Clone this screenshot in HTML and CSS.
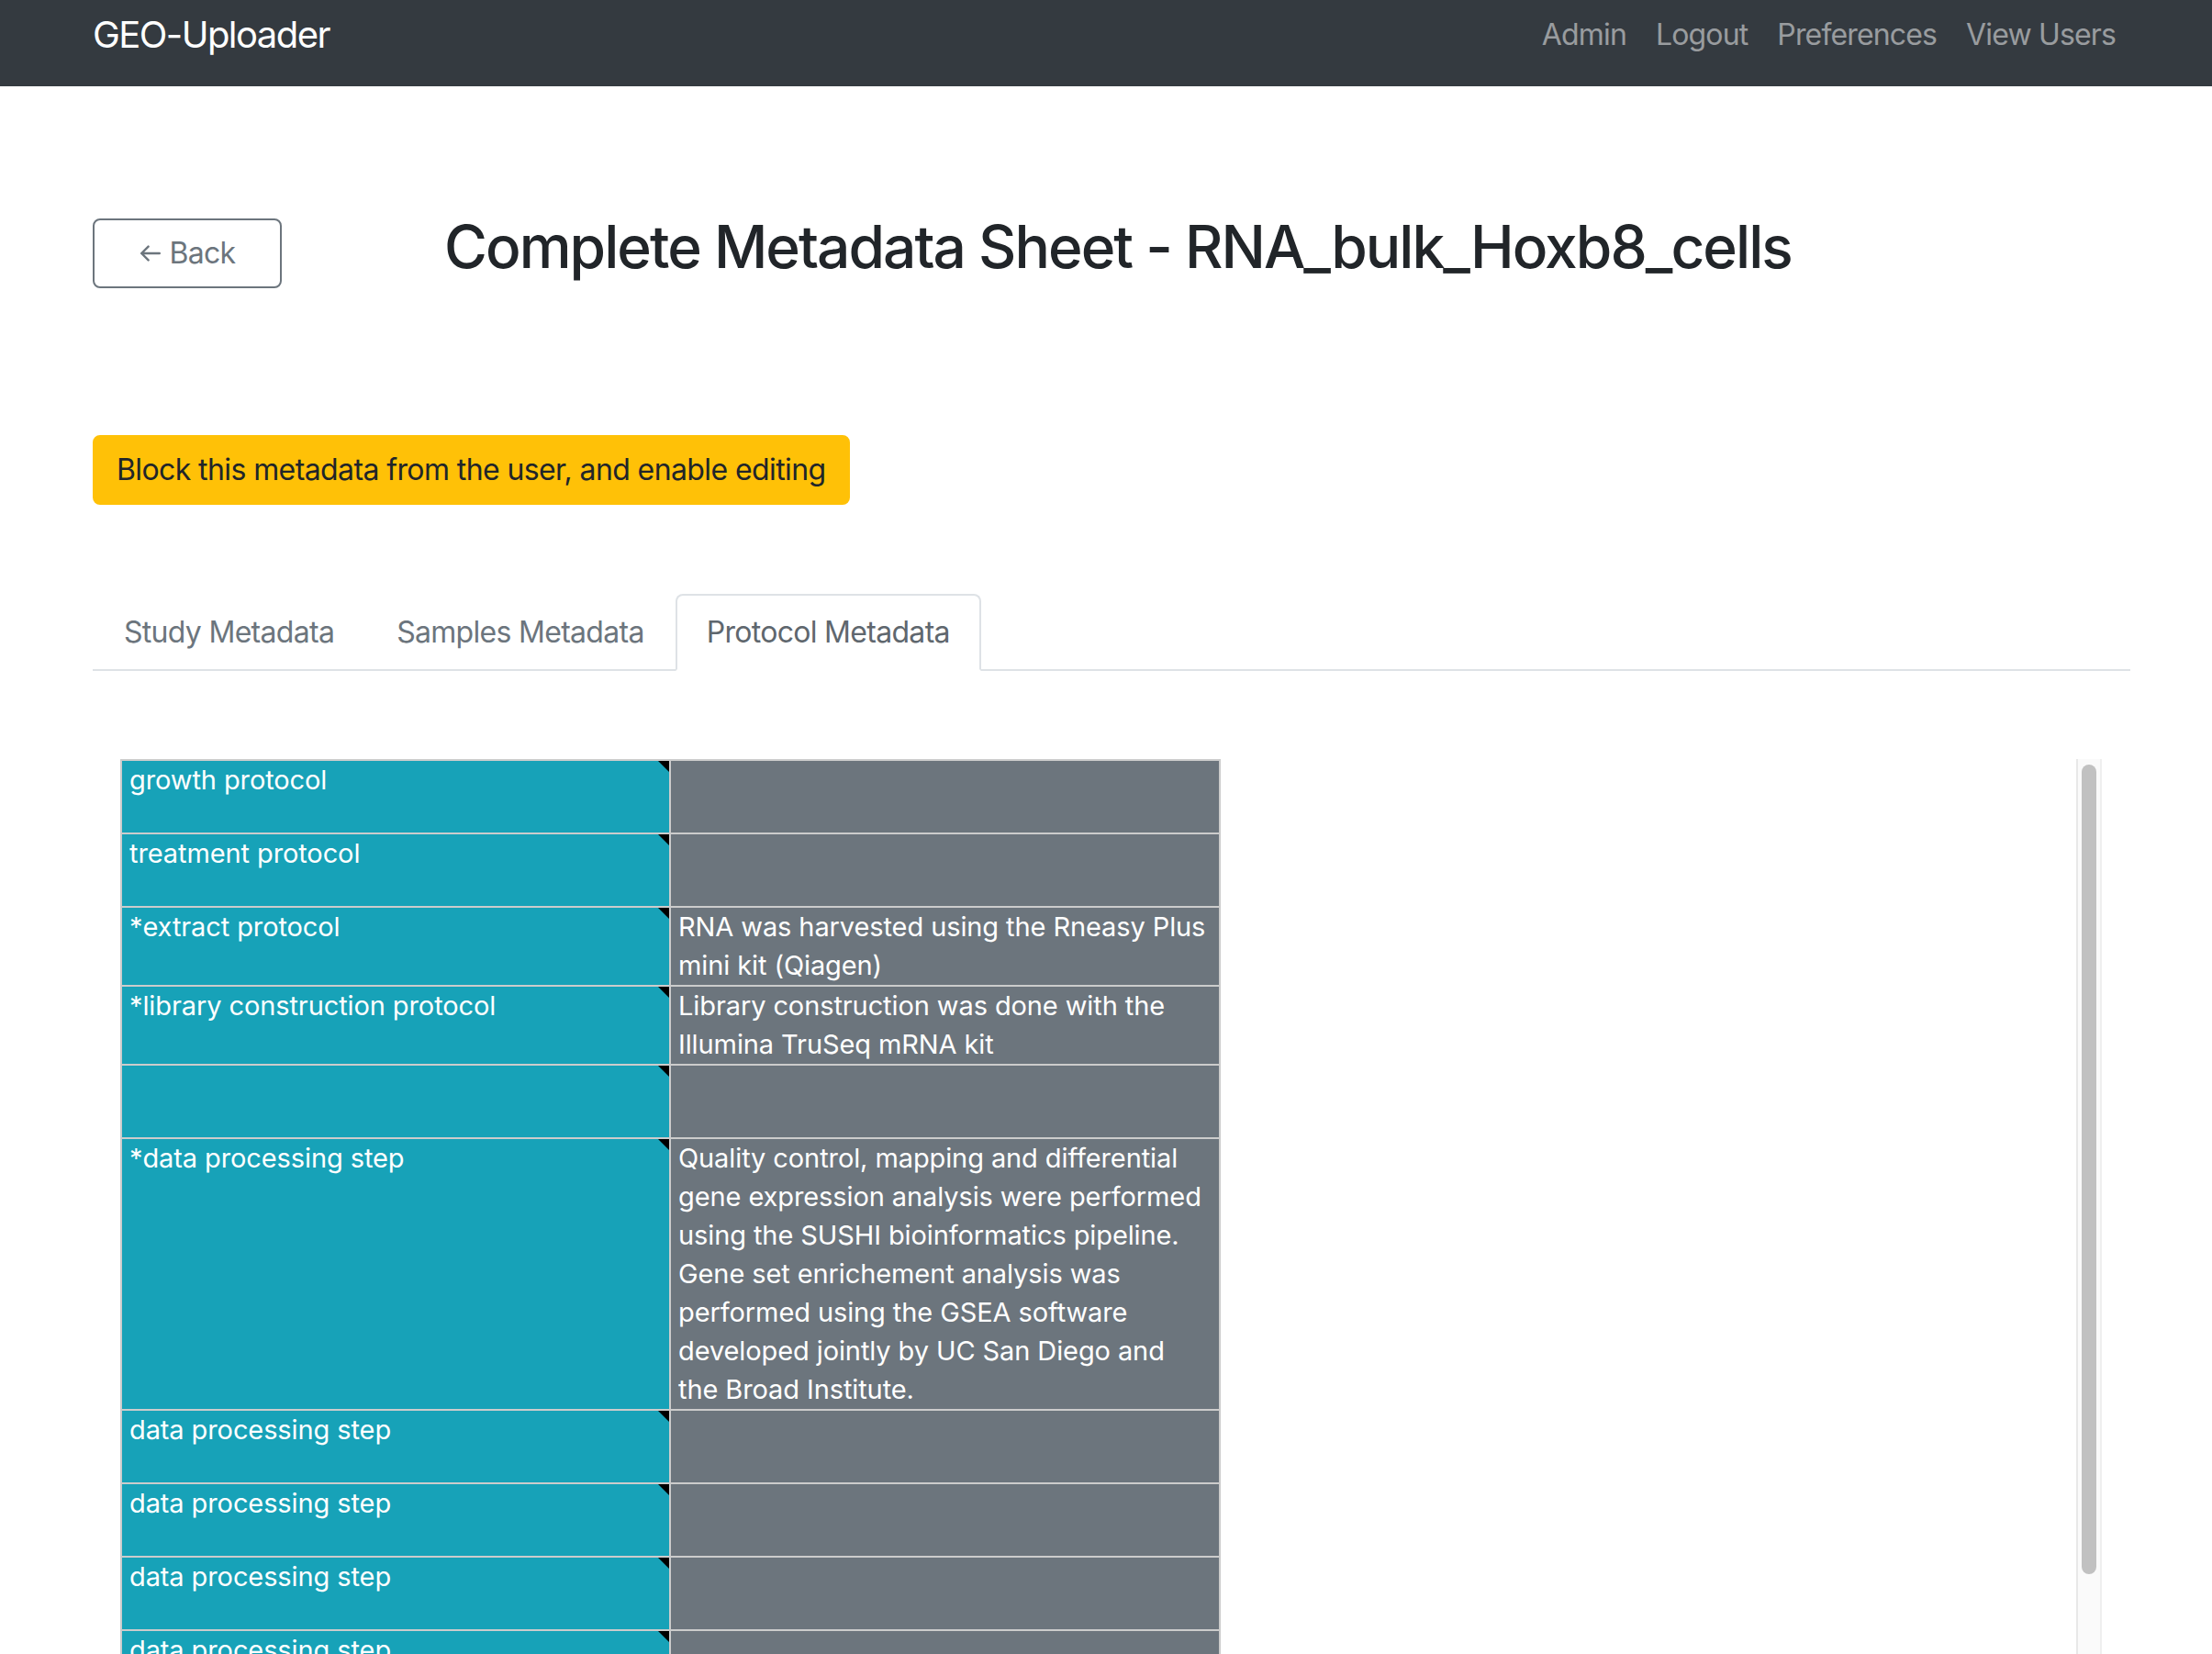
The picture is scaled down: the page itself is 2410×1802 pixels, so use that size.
FILE: index.html
```html
<!DOCTYPE html>
<html lang="en">
<head>
<meta charset="utf-8">
<title>GEO-Uploader</title>
<link rel="stylesheet" href="styles.css">
</head>
<body>
<nav class="navbar">
  <div class="container nav-inner">
    <a class="brand" href="#">GEO-Uploader</a>
    <ul class="nav-links">
      <li><a href="#">Admin</a></li>
      <li><a href="#">Logout</a></li>
      <li><a href="#">Preferences</a></li>
      <li><a href="#">View Users</a></li>
    </ul>
  </div>
</nav>

<main class="container">
  <div class="head-row">
    <div class="back-col">
      <a class="btn btn-back" href="#">
        <svg class="arrow" width="23" height="18" viewBox="0 0 23 18" aria-hidden="true"><path d="M21.8 9H2.2M9.6 1.6L2.2 9l7.4 7.4" fill="none" stroke="#6c757d" stroke-width="2.4" stroke-linecap="round" stroke-linejoin="round"/></svg>
        <span>Back</span>
      </a>
    </div>
    <h2 class="title">Complete Metadata Sheet - RNA_bulk_Hoxb8_cells</h2>
  </div>

  <div class="block-row">
    <button class="btn btn-warning">Block this metadata from the user, and enable editing</button>
  </div>

  <ul class="nav-tabs">
    <li><a class="tab" href="#">Study Metadata</a></li>
    <li><a class="tab" href="#">Samples Metadata</a></li>
    <li><a class="tab active" href="#">Protocol Metadata</a></li>
  </ul>

  <div class="tab-pane">
    <div class="grid-wrap">
      <div class="grid-view">
        <div class="hot">
          <div class="cell key">growth protocol</div><div class="cell val"></div>
          <div class="cell key">treatment protocol</div><div class="cell val"></div>
          <div class="cell key">*extract protocol</div><div class="cell val">RNA was harvested using the Rneasy Plus<br>mini kit (Qiagen)</div>
          <div class="cell key">*library construction protocol</div><div class="cell val">Library construction was done with the<br>Illumina TruSeq mRNA kit</div>
          <div class="cell key"></div><div class="cell val"></div>
          <div class="cell key">*data processing step</div><div class="cell val">Quality control, mapping and differential<br>gene expression analysis were performed<br>using the SUSHI bioinformatics pipeline.<br>Gene set enrichement analysis was<br>performed using the GSEA software<br>developed jointly by UC San Diego and<br>the Broad Institute.</div>
          <div class="cell key">data processing step</div><div class="cell val"></div>
          <div class="cell key">data processing step</div><div class="cell val"></div>
          <div class="cell key">data processing step</div><div class="cell val"></div>
          <div class="cell key">data processing step</div><div class="cell val"></div>
          <div class="cell key">data processing step</div><div class="cell val"></div>
          <div class="cell key">*genome build/assembly</div><div class="cell val"></div>
          <div class="cell key">*processed data files format and content</div><div class="cell val"></div>
          <div class="cell key"></div><div class="cell val"></div>
        </div>
      </div>
      <div class="vbar"><div class="thumb"></div></div>
    </div>
  </div>
</main>
</body>
</html>
```
FILE: styles.css
```css
html, body {
  overflow: hidden;
}
body {
  margin: 0;
  font-family: "Inter", "Noto Sans", sans-serif;
  font-size: 32px;
  line-height: 48px;
  color: #212529;
  background: #fff;
  letter-spacing: -0.7px;
}
a { text-decoration: none; }

.container {
  width: 2280px;
  box-sizing: border-box;
  padding: 0 30px;
  margin-left: calc(50% - 1134px);
}

/* navbar */
.navbar {
  background: #343a40;
  height: 94px;
}
.nav-inner {
  display: flex;
  align-items: flex-start;
  padding-top: 8px;
}
.brand {
  color: #fff;
  font-size: 40px;
  line-height: 60px;
  letter-spacing: -1.55px;
}
.nav-links {
  display: flex;
  list-style: none;
  margin: 0 0 0 auto;
  padding: 0;
}
.nav-links a {
  display: block;
  padding: 6px 16px 0;
  line-height: 48px;
  color: rgba(255, 255, 255, 0.5);
  letter-spacing: -0.85px;
}

/* header row */
.head-row {
  display: grid;
  grid-template-columns: 320px 1fr;
  column-gap: 63px;
  align-items: start;
  margin-top: 137px;
}
.btn {
  display: inline-flex;
  align-items: center;
  box-sizing: border-box;
  border: 2px solid transparent;
  border-radius: 8px;
  padding: 12px 24px;
  font: inherit;
  line-height: 48px;
  letter-spacing: inherit;
}
.btn-back {
  margin-top: 7px;
  width: 206px;
  justify-content: center;
  gap: 10px;
  border-color: #6c757d;
  color: #6c757d;
  padding: 12px 0;
}
.arrow { display: block; }
.title {
  margin: 0;
  font-size: 64px;
  font-weight: 500;
  line-height: 76.8px;
  letter-spacing: -1.96px;
  color: #212529;
}

.block-row {
  margin-top: 160px;
}
.btn-warning {
  background: #ffc107;
  border-color: #ffc107;
  color: #212529;
  letter-spacing: -0.6px;
  cursor: pointer;
}

/* tabs */
.nav-tabs {
  display: flex;
  list-style: none;
  margin: 97px 0 0;
  padding: 0;
  border-bottom: 2px solid #dee2e6;
}
.nav-tabs li {
  margin-bottom: -2px;
}
.tab {
  display: block;
  padding: 16px 32px;
  line-height: 48px;
  border: 2px solid transparent;
  border-radius: 8px 8px 0 0;
  color: #6c757d;
}
.tab.active {
  color: #5f676e;
  background: #fff;
  border-color: #dee2e6 #dee2e6 #fff;
}

/* grid */
.tab-pane {
  padding: 96px 31px 0 30px;
}
.grid-wrap {
  display: flex;
  height: 1100px;
}
.grid-view {
  flex: 1;
  overflow: hidden;
}
.hot {
  display: grid;
  grid-template-columns: 598px 599px;
  width: max-content;
  border-left: 2px solid #ccc;
  border-top: 2px solid #ccc;
  font-size: 29px;
  line-height: 42px;
  letter-spacing: -0.1px;
  color: #fff;
}
.cell {
  position: relative;
  box-sizing: border-box;
  min-height: 80px;
  padding: 0 8px;
  border-right: 2px solid #ccc;
  border-bottom: 2px solid #ccc;
  white-space: nowrap;
  overflow: hidden;
}
.key {
  background: #17a2b8;
}
.key::after {
  content: "";
  position: absolute;
  top: 0;
  right: 0;
  border-left: 12px solid transparent;
  border-top: 12px solid #000;
}
.val {
  background: #6c757d;
}

.vbar {
  width: 28px;
  box-sizing: border-box;
  background: #fafafa;
  border-left: 2px solid #e8e8e8;
  border-right: 2px solid #efefef;
  padding: 6px 4px 0;
}
.thumb {
  width: 16px;
  height: 882px;
  border-radius: 8px;
  background: #c1c1c1;
}
```
